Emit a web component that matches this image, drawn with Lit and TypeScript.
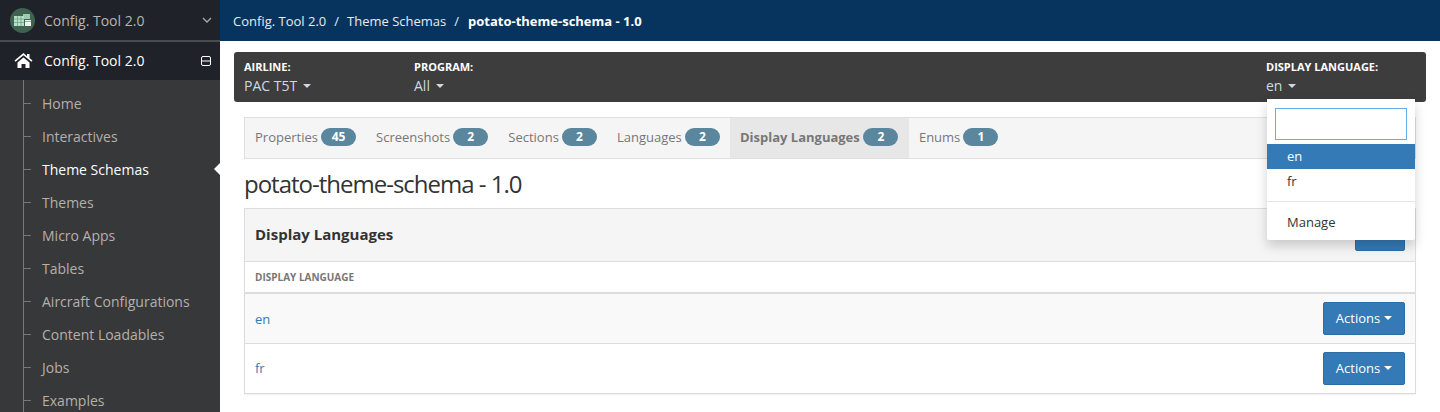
import { LitElement, html, css } from "lit";
import { customElement } from "lit/decorators.js";

const NAV = ["Home","Interactives","Theme Schemas","Themes","Micro Apps","Tables","Aircraft Configurations","Content Loadables","Jobs","Examples"];
const TABS: [string, number][] = [["Properties",45],["Screenshots",2],["Sections",2],["Languages",2],["Display Languages",2],["Enums",1]];

@customElement("app-root")
export class AppRoot extends LitElement {
  static styles = css`
    :host { display:block; width:1440px; height:412px; overflow:hidden; font-family:"Open Sans",sans-serif; font-size:13px; color:#333; background:#fff; }
    * { box-sizing:border-box; }
    .page { display:flex; height:412px; }
    .side { width:220px; flex:none; background:#37383a; overflow:hidden; }
    .brand { height:40px; background:#1f2228; display:flex; align-items:center; padding:0 7px 0 10px; color:#b5b5b5; font-size:14px; }
    .logo { width:25px; height:25px; flex:none; margin-right:9px; }
    .brand span { flex:1; }
    .rule { height:5px; background:#1f2228; border-top:2px solid #4a4c4f; }
    .root { height:35px; background:#1f2228; display:flex; align-items:center; padding:0 9px 4px 14px; color:#fff; font-size:14px; }
    .root span { flex:1; margin-left:11px; }
    .nav { position:relative; padding:7px 0 0; margin:0; list-style:none; }
    .nav::before { content:""; position:absolute; left:23px; top:0; bottom:0; width:1px; background:#77787a; }
    .item { position:relative; height:33px; display:flex; align-items:center; padding-left:42px; color:#b4b0aa; font-size:14px; white-space:nowrap; }
    .item::before { content:""; position:absolute; left:24px; top:16px; width:7px; height:1px; background:#77787a; }
    .item.on { color:#fff; }
    .item.on::after { content:""; position:absolute; right:0; top:10px; border:6px solid transparent; border-right-color:#fff; border-left-width:0; }
    .main { flex:1; min-width:0; position:relative; }
    .crumb { height:41px; background:#07345f; color:#e6ebf0; display:flex; align-items:center; gap:8px; padding:0 13px; font-size:13px; }
    .crumb b { color:#fff; font-weight:700; margin-left:1px; }
    .filters { margin:11px 14px 0; height:50px; background:#3d3d3d; border-radius:3px; display:flex; padding:8px 10px 0; color:#fff; position:relative; }
    .f { display:flex; flex-direction:column; }
    .f.a { width:170px; }
    .f.l { margin-left:auto; width:150px; }
    .f.p { flex:1; }
    .f label { font-size:11px; font-weight:700; line-height:14px; }
    .f div { font-size:14px; line-height:20px; color:#cfd8e3; margin-top:2px; display:flex; align-items:center; }
    .caret { display:inline-block; margin-left:6px; border-top:4px solid currentColor; border-left:4px solid transparent; border-right:4px solid transparent; }
    .caret.small { margin-left:4px; }
    .menu { position:absolute; left:1047px; top:99px; width:148px; height:141px; background:#fff; box-shadow:0 6px 12px rgba(0,0,0,.18); padding:9px 0 0; z-index:5; border-radius:0 0 2px 2px; }
    .menu input { display:block; width:132px; height:32px; margin:0 8px 4px; border:1px solid #66afe9; outline:none; background:#fff; }
    .menu div { height:25px; line-height:25px; padding-left:20px; font-size:13px; color:#333; }
    .menu .sel { background:#337ab7; color:#fff; }
    .menu hr { border:0; border-top:1px solid #e5e5e5; margin:7px 0 8px; }
    .body { padding:15px 24px 0; }
    .tabs { height:42px; background:#f5f5f5; border:1px solid #e0e0e0; display:flex; }
    .tab { display:flex; align-items:center; padding:0 10px 2px; color:#777; font-size:13px; gap:3px; height:40px; }
    .tab.on { background:#e7e7e7; font-weight:700; padding-right:10.5px; gap:3.5px; }
    .badge { min-width:35.15px; height:18px; padding:0 7px; line-height:18px; text-align:center; border-radius:9px; background:#5a879e; color:#fff; font-size:12px; font-weight:700; }
    h1 { font-size:24px; font-weight:400; margin:0; height:49px; line-height:49px; letter-spacing:-1px; color:#333; }
    .panel { border:1px solid #ddd; box-shadow:0 1px 1px rgba(0,0,0,.05); }
    .ph { position:relative; height:53px; background:#f5f5f5; border-bottom:1px solid #ddd; display:flex; align-items:center; padding:0 10px 2px; }
    .ph strong { font-size:15px; font-weight:700; color:#333; }
    .btn { background:#337ab7; border:1px solid #2e6da4; border-radius:2px; color:#fff; font-size:13px; font-family:inherit; display:flex; align-items:center; justify-content:center; width:82px; height:33px; padding:0 0 1px; }
    .add { position:absolute; right:10px; top:9px; width:50px; padding:0 0 1px; }
    .th { height:32px; border-bottom:2px solid #ddd; display:flex; align-items:center; padding:0 10px; font-size:10px; font-weight:700; color:#777; }
    .row { height:50px; display:flex; align-items:center; justify-content:space-between; padding:0 10px; color:#337ab7; font-size:13px; }
    .row.odd { background:#f9f9f9; border-bottom:1px solid #ddd; }
    .row.even { height:49px; }
    .row.even span { margin-top:-2px; }
  `;
  render() {
    return html`<div class="page">
      <aside class="side">
        <div class="brand">
          <svg class="logo" viewBox="0 0 25 25"><circle cx="12.5" cy="12.5" r="12.5" fill="#3f6350"/><rect x="13" y="6" width="7" height="5" fill="#9ccab0"/><rect x="4" y="8" width="10" height="10" fill="#b8e0c8"/><path d="M4 11h10M4 14.5h10M7.5 8v10M11 8v10" stroke="#6fa488" stroke-width=".8"/><rect x="15" y="12" width="6" height="6" fill="#eef3f0"/><path d="M15 13.5h6" stroke="#7b9c8a" stroke-width=".8"/></svg>
          <span>Config. Tool 2.0</span>
          <svg width="12" height="8" viewBox="0 0 12 8"><path d="M2 2l4 4 4-4" fill="none" stroke="#a8a8a8" stroke-width="1.3"/></svg>
        </div>
        <div class="rule"></div>
        <div class="root">
          <svg width="19" height="15" viewBox="0 0 18 15"><path fill="#fff" d="M9 0L0 7.6l1 1.2L9 2.2l8 6.6 1-1.2-3-2.5V1h-2.5v2.2zM3 9.6V15h4v-4h4v4h4V9.6L9 4.6z"/></svg>
          <span>Config. Tool 2.0</span>
          <svg width="10" height="10" viewBox="0 0 10 10"><rect x=".5" y=".5" width="9" height="9" rx="1.5" fill="none" stroke="#fff"/><path d="M1 5h8" stroke="#fff"/></svg>
        </div>
        <ul class="nav">
          ${NAV.map((n) => html`<li class="item ${n === "Theme Schemas" ? "on" : ""}">${n}</li>`)}
        </ul>
      </aside>
      <main class="main">
        <div class="crumb"><span>Config. Tool 2.0</span><span>/</span><span>Theme Schemas</span><span>/</span><b>potato-theme-schema - 1.0</b></div>
        <div class="filters">
          <div class="f a"><label>AIRLINE:</label><div>PAC T5T<i class="caret"></i></div></div>
          <div class="f p"><label>PROGRAM:</label><div>All<i class="caret"></i></div></div>
          <div class="f l"><label>DISPLAY LANGUAGE:</label><div>en<i class="caret"></i></div></div>
        </div>
        <div class="body">
          <nav class="tabs">
            ${TABS.map(([t, c]) => html`<div class="tab ${t === "Display Languages" ? "on" : ""}">${t}<span class="badge">${c}</span></div>`)}
          </nav>
          <h1>potato-theme-schema - 1.0</h1>
          <section class="panel">
            <div class="ph"><strong>Display Languages</strong><button class="btn add">Add</button></div>
            <div class="th">DISPLAY LANGUAGE</div>
            <div class="row odd"><span>en</span><button class="btn">Actions<i class="caret small"></i></button></div>
            <div class="row even"><span>fr</span><button class="btn">Actions<i class="caret small"></i></button></div>
          </section>
        </div>
        <div class="menu">
          <input type="text" />
          <div class="sel">en</div>
          <div>fr</div>
          <hr />
          <div>Manage</div>
        </div>
      </main>
    </div>`;
  }
}
